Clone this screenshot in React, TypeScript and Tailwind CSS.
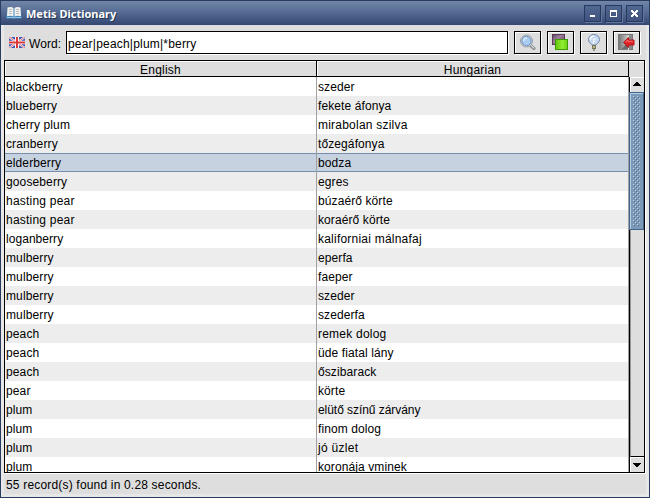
import React from "react";

const rows: [string, string][] = [
  ["blackberry", "szeder"],
  ["blueberry", "fekete áfonya"],
  ["cherry plum", "mirabolan szilva"],
  ["cranberry", "tőzegáfonya"],
  ["elderberry", "bodza"],
  ["gooseberry", "egres"],
  ["hasting pear", "búzaérő körte"],
  ["hasting pear", "koraérő körte"],
  ["loganberry", "kaliforniai málnafaj"],
  ["mulberry", "eperfa"],
  ["mulberry", "faeper"],
  ["mulberry", "szeder"],
  ["mulberry", "szederfa"],
  ["peach", "remek dolog"],
  ["peach", "üde fiatal lány"],
  ["peach", "őszibarack"],
  ["pear", "körte"],
  ["plum", "elütő színű zárvány"],
  ["plum", "finom dolog"],
  ["plum", "jó üzlet"],
  ["plum", "koronája vminek"],
];

const SELECTED = 4;

// Phrases whose letters sit closer or wider than the table's usual spacing.
const tracking: Record<string, string> = {
  "hasting pear": "tracking-[0.22px]",
  "mirabolan szilva": "tracking-[0.22px]",
  "kaliforniai málnafaj": "tracking-[0.22px]",
  "remek dolog": "tracking-[0.22px]",
  "jó üzlet": "tracking-[0.3px]",
  "elütő színű zárvány": "tracking-[-0.05px]",
  loganberry: "tracking-[0.05px]",
};

function BookIcon() {
  return (
    <svg width="16" height="16" viewBox="0 0 16 16" className="block shrink-0">
      <path d="M1.500 4h13l1.500 9.500H0z" fill="#3f86bf" />
      <path d="M1.500 2.500q4-1 6 .5v8.500q-3-1.500-6.500-.3zM14.500 2.500q-4-1-6 .5v8.500q3-1.500 6.500-.3z" fill="#f1f1ef" />
      <path d="M3 4.500h3M3 6.500h3M3 8.500h3M10 4.500h3M10 6.500h3M10 8.500h3" stroke="#b9bdc1" />
      <path d="M1 12.500h6l1 .7 1-.7h6" fill="none" stroke="#b9d6ea" strokeWidth=".8" />
    </svg>
  );
}

function FlagIcon() {
  return (
    <svg width="16" height="11" viewBox="0 0 16 11" className="block shrink-0">
      <rect width="16" height="11" fill="#4058b0" />
      <path d="M0 0l16 11M16 0L0 11" stroke="#f3f3fa" strokeWidth="2" />
      <path d="M0 0l16 11M16 0L0 11" stroke="#e05a5c" strokeWidth=".8" />
      <path d="M8 0v11" stroke="#fff" strokeWidth="4" />
      <path d="M0 5.500h16" stroke="#fff" strokeWidth="3.400" />
      <path d="M8 0v11M0 5.500h16" stroke="#dc3838" strokeWidth="2" />
    </svg>
  );
}

function SearchIcon() {
  return (
    <svg width="17" height="17" viewBox="0 0 17 17" className="block">
      <path d="M11.500 11.500l3.500 3" stroke="#84888c" strokeWidth="3" strokeLinecap="round" />
      <path d="M12 11.500l2.800 2.500" stroke="#d0d3d6" strokeWidth="1.200" strokeLinecap="round" />
      <circle cx="7.500" cy="7" r="6" fill="#d5dadd" stroke="#9a9fa4" />
      <circle cx="7.500" cy="7" r="4.600" fill="#a9ccf0" stroke="#6793c6" />
      <path d="M4.500 7A3.200 3.200 0 018 4" stroke="#e4f2ff" strokeWidth="1.500" fill="none" />
    </svg>
  );
}

function LayersIcon() {
  return (
    <svg width="17" height="17" viewBox="0 0 17 17" className="block">
      <defs>
        <linearGradient id="purple" x2="1" y2="1">
          <stop stopColor="#5f4061" />
          <stop offset=".4" stopColor="#9d809c" />
          <stop offset="1" stopColor="#5b3c5d" />
        </linearGradient>
        <linearGradient id="green">
          <stop stopColor="#62c50d" />
          <stop offset=".6" stopColor="#92ee32" />
          <stop offset="1" stopColor="#67cf11" />
        </linearGradient>
      </defs>
      <rect x=".5" y=".5" width="12" height="10" fill="url(#purple)" stroke="#573b59" />
      <rect x="3.500" y="5.500" width="12" height="10" fill="url(#green)" stroke="#419b09" />
    </svg>
  );
}

function BulbIcon() {
  return (
    <svg width="14" height="17" viewBox="0 0 14 17" className="block">
      <path d="M5 11C4.500 9.500 1.500 9 1.500 5.500a5.500 5 0 0111 0C12.500 9 9.500 9.500 9 11z" fill="#c6d9f1" stroke="#7288b0" />
      <path d="M3.500 5.500A4 3.500 0 017 2" stroke="#fff" strokeWidth="1.600" fill="none" />
      <path d="M6.500 10V5h3M6.500 7.500h2" stroke="#f5f9ff" fill="none" />
      <rect x="5.500" y="11.500" width="3" height="3" fill="#e5e1a4" stroke="#77745c" />
      <path d="M5 13h4" stroke="#8e8a61" />
      <path d="M6 16h2" stroke="#555" />
    </svg>
  );
}

function ExitIcon() {
  return (
    <svg width="17" height="17" viewBox="0 0 17 17" className="block">
      <defs>
        <linearGradient id="door">
          <stop stopColor="#777" />
          <stop offset="1" stopColor="#c8c8c8" />
        </linearGradient>
      </defs>
      <rect x=".5" y=".5" width="14" height="15" fill="#8a8a8a" stroke="#777" />
      <path d="M1 1h9v14.500H1z" fill="url(#door)" />
      <path d="M10.500 7l-7 8.500h7z" fill="#6b6b6b" />
      <path d="M10.500 1v15" stroke="#e2e2e2" />
      <path d="M5.500 8.500L10.500 3.500V6h5.500v5h-5.500v2.500z" fill="#e32228" stroke="#b51319" />
      <path d="M7.500 8.200l2.300-2.300V7.300h5" fill="none" stroke="#f67a7a" />
    </svg>
  );
}

function ToolButton({ children }: { children: React.ReactNode }) {
  return (
    <button className="flex h-[23px] w-[27px] shrink-0 items-center justify-center border border-black bg-[#dedede] shadow-[1px_1px_0_#fff,inset_1px_1px_0_#fff]">
      {children}
    </button>
  );
}

function WindowButton({ children }: { children: React.ReactNode }) {
  return (
    <button className="flex size-[17px] items-center justify-center border border-[#26395f] bg-gradient-to-b from-[#516890] to-[#3e527d] shadow-[1px_1px_0_#62779c]">
      <svg width="9" height="9" viewBox="0 0 9 9" shapeRendering="crispEdges">{children}</svg>
    </button>
  );
}

function ArrowButton({ down = false }: { down?: boolean }) {
  return (
    <div className={`flex h-[15px] w-full shrink-0 items-center justify-center border-l border-t border-white bg-[#dedede] pr-px ${down ? "" : "pb-[2px]"}`}>
      <svg width="8" height="4" viewBox="0 0 8 4" shapeRendering="crispEdges">
        <path d={down ? "M0 0h8v1H7v1H6v1H5v1H3V3H2V2H1V1H0z" : "M3 0h2v1h1v1h1v1h1v1H0V3h1V2h1V1h1z"} />
      </svg>
    </div>
  );
}

export default function App() {
  return (
    <div className="flex h-[498px] w-[650px] flex-col overflow-hidden border-x border-b border-[#293c60] bg-[#dedede] font-['Liberation_Sans',Arial,sans-serif] text-[12px] text-black">
      <header className="flex h-[25px] shrink-0 items-center border-t border-[#293c60] bg-gradient-to-b from-[#7186a9] via-[#546990] to-[#344771] pl-[5px] pr-[6px]">
        <BookIcon />
        <h1 className="ml-1 flex-1 pt-px font-['Noto_Sans',sans-serif] text-[11px] font-bold leading-[14px] text-white [text-shadow:1px_1px_0_#263553]">Metis Dictionary</h1>
        <div className="flex gap-1 pt-px">
          <WindowButton><path fill="#fff" d="M2 6h5v2H2z" /></WindowButton>
          <WindowButton><path fill="#fff" fillRule="evenodd" d="M1 1h7v7H1zM2 3v4h5V3z" /></WindowButton>
          <WindowButton><path fill="#fff" d="M1 1h2v1h1v1h1V2h1V1h2v2H7v1H6v1h1v1h1v2H6V7H5V6H4v1H3v1H1V6h1V5h1V4H2V3H1z" /></WindowButton>
        </div>
      </header>

      <div className="flex min-h-0 flex-1 flex-col border-x-[3px] border-b-[3px] border-[#e7e7e7]">
        <div className="flex h-[35px] shrink-0 items-center pl-[5px] pr-[6px]">
          <FlagIcon />
          <label className="ml-1 w-[37px] whitespace-nowrap pt-[2px] text-[12px] tracking-[0.1px]">Word:</label>
          <input className="h-[23px] min-w-0 flex-1 border border-black bg-white pl-[1px] pt-[2px] text-[12px] tracking-[0.2px] shadow-[1px_1px_0_#fff] outline-none" defaultValue="pear|peach|plum|*berry" />
          <div className="ml-1.5 flex gap-1.5">
            <ToolButton><SearchIcon /></ToolButton>
            <ToolButton><LayersIcon /></ToolButton>
            <ToolButton><BulbIcon /></ToolButton>
            <ToolButton><ExitIcon /></ToolButton>
          </div>
        </div>

        <div className="mr-[1px] flex h-[413px] shrink-0 flex-col border border-black shadow-[1px_1px_0_#fff]">
          <div className="flex h-[16px] shrink-0 text-center leading-[18px] tracking-[0.22px]">
            <div className="w-[312px] border-b border-r border-black shadow-[inset_1px_1px_0_#fff]">English</div>
            <div className="w-[312px] border-b border-r border-black shadow-[inset_1px_1px_0_#fff]">Hungarian</div>
            <div className="flex-1 shadow-[inset_0_1px_0_#fff]" />
          </div>
          <div className="flex min-h-0 flex-1">
            <div className="w-[624px] overflow-hidden border-r border-[#a0a0a0]">
              {rows.map(([en, hu], i) => (
                <div
                  key={i}
                  className={`flex h-[19px] border-y leading-[19px] ${
                    i === SELECTED ? "border-[#778fae] bg-[#c7d2e1]" : i % 2 ? "border-[#ededed] bg-[#ededed]" : "border-white bg-white"
                  }`}
                >
                  <div className={`-my-px w-[312px] border-r border-[#a0a0a0] pl-px pt-px ${tracking[en] ?? "tracking-[0.12px]"}`}>{en}</div>
                  <div className={`flex-1 pl-px ${tracking[hu] ?? "tracking-[0.1px]"}`}>{hu}</div>
                </div>
              ))}
            </div>
            <div className="flex flex-1 flex-col border-l border-black">
              <ArrowButton />
              <div className="-ml-px h-[138px] shrink-0 border border-[#42658d] bg-[#7b98b6] p-[3px] shadow-[inset_1px_1px_0_#b4cce2]">
                <svg width="100%" height="100%" shapeRendering="crispEdges" className="block">
                  <defs>
                    <pattern id="grip" width="4" height="4" patternUnits="userSpaceOnUse">
                      <path fill="#c6d6e5" d="M0 0h1v1H0zM2 2h1v1H2z" />
                      <path fill="#4f6b8a" d="M1 1h1v1H1zM3 3h1v1H3z" />
                    </pattern>
                  </defs>
                  <rect width="100%" height="100%" fill="url(#grip)" />
                </svg>
              </div>
              <div className="flex-1 border-b border-l border-b-black border-l-[#999]" />
              <ArrowButton down />
            </div>
          </div>
        </div>

        <footer className="pl-[2px] pt-[5px] leading-[14px] tracking-[0.18px]">55 record(s) found in 0.28 seconds.</footer>
      </div>
    </div>
  );
}
